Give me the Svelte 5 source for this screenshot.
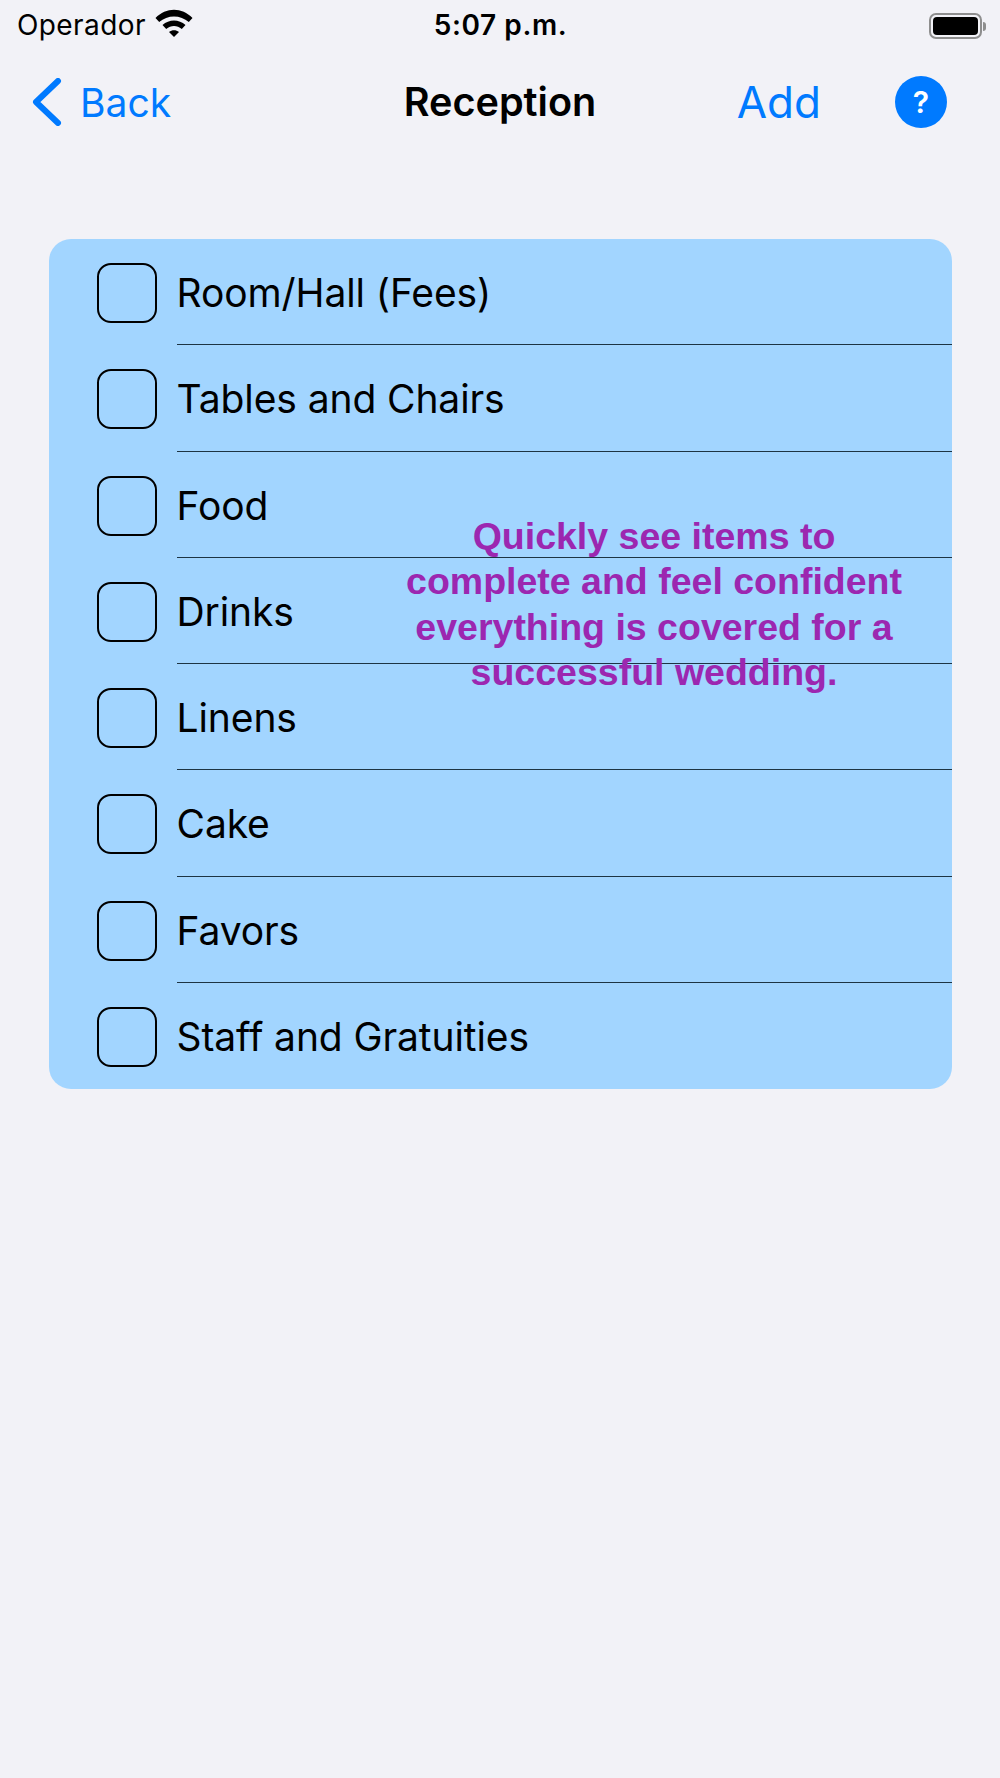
<script>
	const items = [
		'Room/Hall (Fees)',
		'Tables and Chairs',
		'Food',
		'Drinks',
		'Linens',
		'Cake',
		'Favors',
		'Staff and Gratuities'
	];
</script>

<div class="screen">
	<div class="status">
		<div class="carrier">
			<span>Operador</span>
			<svg width="38" height="28" viewBox="0 0 38 28">
				<path d="M0.5 9 C11 -2 27 -2 37.5 9 L33.8 13 C25.5 5.5 12.5 5.5 4.2 13 Z" />
				<path d="M7.5 16 C14 10 24 10 30.5 16 L26.8 20 C22 16 16 16 11.2 20 Z" />
				<path d="M14 23 C17 20.6 21 20.6 24 23 L19 28 Z" />
			</svg>
		</div>
		<div class="time">5:07 p.m.</div>
		<div class="battery">
			<div class="shell"><div class="level"></div></div>
			<div class="nub"></div>
		</div>
	</div>

	<nav>
		<div class="back">
			<svg width="30" height="48" viewBox="0 0 30 48">
				<path d="M26 3 L4 24 L26 45" />
			</svg>
			<span>Back</span>
		</div>
		<div class="title">Reception</div>
		<div class="actions">
			<span class="add">Add</span>
			<div class="help">?</div>
		</div>
	</nav>

	<div class="card">
		{#each items as item, i}
			<div class="row">
				<div class="check"></div>
				<div class="label" class:last={i === items.length - 1}>{item}</div>
			</div>
		{/each}
		<div class="callout">
			Quickly see items to complete and feel confident everything is covered for a successful wedding.
		</div>
	</div>
</div>

<style>
	:global(body) {
		background: #f2f2f7;
	}

	.screen {
		height: 1778px;
		background: #f2f2f7;
		font-family: Inter, 'Noto Sans', sans-serif;
		color: #000;
		overflow: hidden;
	}

	.status {
		height: 50px;
		display: grid;
		grid-template-columns: 1fr auto 1fr;
		align-items: center;
		padding: 0 14px 4px 17px;
	}

	.carrier {
		display: flex;
		align-items: center;
		gap: 9px;
		font-size: 28px;
		letter-spacing: 0.4px;
	}

	.carrier svg {
		margin-top: -5px;
	}

	.time {
		font-size: 28px;
		font-weight: 600;
		letter-spacing: 0.6px;
		margin-left: -2px;
	}

	.battery {
		display: flex;
		align-items: center;
		justify-content: flex-end;
		gap: 1px;
		margin-top: 2px;
	}

	.shell {
		width: 53px;
		height: 26px;
		box-sizing: border-box;
		border: 2px solid #8e8e8e;
		border-radius: 7px;
		padding: 2px;
	}

	.level {
		height: 100%;
		background: #000;
		border-radius: 4px;
	}

	.nub {
		width: 3px;
		height: 9px;
		background: #8e8e8e;
		border-radius: 0 3px 3px 0;
	}

	nav {
		height: 94px;
		position: relative;
		display: flex;
		align-items: center;
		justify-content: space-between;
		padding: 1px 53px 0 32px;
	}

	.back {
		display: flex;
		align-items: center;
		gap: 18px;
		color: #007aff;
		font-size: 39px;
	}

	.back svg {
		fill: none;
		stroke: #007aff;
		stroke-width: 6;
		stroke-linecap: round;
		stroke-linejoin: round;
	}

	.title {
		position: absolute;
		left: 0;
		right: 0;
		text-align: center;
		font-size: 39.6px;
		font-weight: 600;
		pointer-events: none;
	}

	.actions {
		display: flex;
		align-items: center;
		gap: 74px;
	}

	.add {
		color: #007aff;
		font-size: 44px;
	}

	.help {
		width: 52px;
		height: 52px;
		border-radius: 50%;
		background: #007aff;
		color: #fff;
		font-size: 30px;
		font-weight: 600;
		display: flex;
		align-items: center;
		justify-content: center;
	}

	.card {
		position: relative;
		margin: 90px 48px 0 48.5px;
		height: 850px;
		background: #a2d5ff;
		border-radius: 22px;
		overflow: hidden;
	}

	.row {
		height: 106.25px;
		display: flex;
		align-items: center;
		padding-left: 48px;
	}

	.check {
		flex: none;
		width: 60px;
		height: 60px;
		margin-top: 2px;
		box-sizing: border-box;
		border: 2.5px solid #000;
		border-radius: 14px;
	}

	.label {
		flex: 1;
		height: 100%;
		box-sizing: border-box;
		margin-left: 20px;
		padding-top: 2px;
		display: flex;
		align-items: center;
		font-size: 39px;
		letter-spacing: -0.1px;
		border-bottom: 1px solid #1d3443;
	}

	.label.last {
		border-bottom: none;
	}

	.callout {
		position: absolute;
		left: 348px;
		top: 275px;
		width: 515px;
		text-align: center;
		font-family: 'Liberation Sans', Arial, sans-serif;
		font-weight: 700;
		font-size: 37.5px;
		line-height: 45.3px;
		color: #9c27b0;
	}
</style>
